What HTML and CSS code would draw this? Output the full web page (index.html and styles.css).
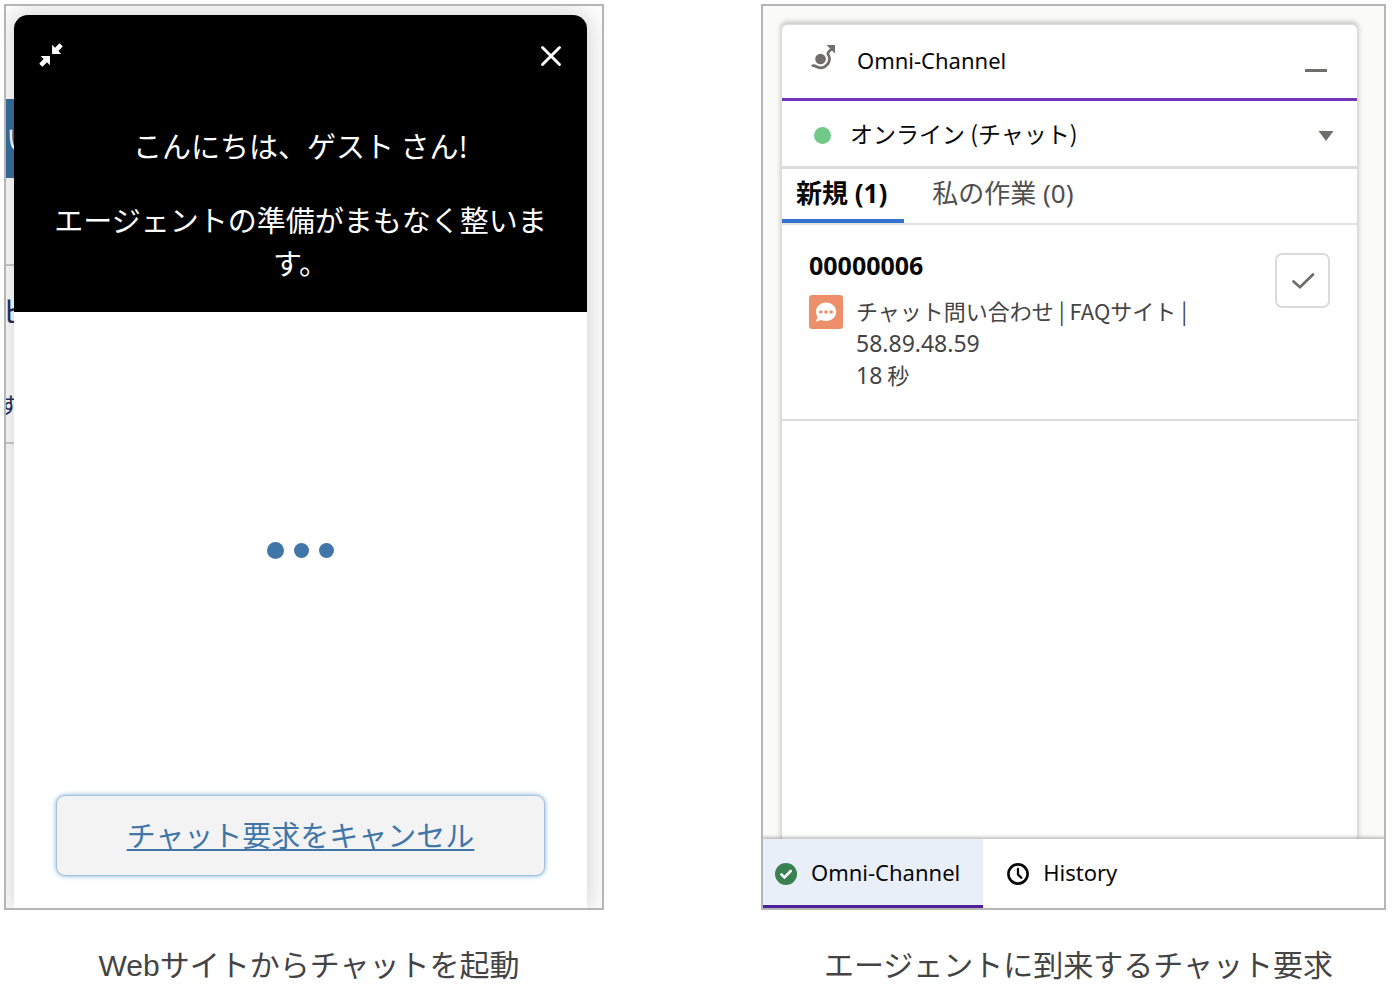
FILE: index.html
```html
<!DOCTYPE html>
<html lang="ja">
<head>
<meta charset="utf-8">
<meta name="viewport" content="width=device-width, initial-scale=1">
<title>チャット</title>
<link rel="stylesheet" href="styles.css">
</head>
<body>
<main class="gallery">
  <figure class="shot">
    <div class="frame site">
      <div class="site-page" aria-hidden="true">
        <div class="site-banner">い</div>
        <div class="site-title">ビ</div>
        <div class="site-text">す</div>
      </div>
      <section class="chat">
        <header class="chat-head">
          <div class="chat-tools">
            <button class="icon-btn" type="button" aria-label="最小化">
              <svg width="26" height="26" viewBox="0 0 24 24"><g fill="#fff"><path d="M13 2.500v8.500h8.500l-2.700-2.700 3.600-3.600q.6-.6 0-1.200l-1.900-1.900q-.6-.6-1.200 0l-3.600 3.600z"/><path d="M11 21.500V13H2.500l2.700 2.700-3.600 3.600q-.6.6 0 1.200l1.900 1.900q.6.600 1.200 0l3.600-3.600z"/></g></svg>
            </button>
            <button class="icon-btn" type="button" aria-label="閉じる">
              <svg width="24" height="24" viewBox="0 0 24 24"><path d="M3.500 3.500l17 17M20.500 3.500l-17 17" stroke="#fff" stroke-width="2.900" stroke-linecap="round"/></svg>
            </button>
          </div>
          <p class="greeting">こんにちは、ゲスト さん!</p>
          <p class="greeting">エージェントの準備がまもなく整います。</p>
        </header>
        <div class="loading" role="status" aria-label="読み込み中">
          <span class="dot dot-large"></span><span class="dot"></span><span class="dot"></span>
        </div>
        <button class="cancel" type="button">チャット要求をキャンセル</button>
      </section>
    </div>
    <figcaption>Webサイトからチャットを起動</figcaption>
  </figure>

  <figure class="shot">
    <div class="frame console">
      <section class="omni">
        <header class="omni-head">
          <svg class="omni-icon" width="24" height="26" viewBox="0 0 24 26"><circle cx="9.500" cy="15" r="5.300" fill="#706e6b"/><path d="M.8 22.300q2-1.600 4.200.2 4.500 2.500 8.800.2 4.700-3 4.700-7.900 0-2.300-1.300-4-.8-1.500.5-3L20.500 5" fill="none" stroke="#706e6b" stroke-width="2.700"/><path d="M15.500 1H24v8.500z" fill="#706e6b"/></svg>
          <h1 class="omni-title">Omni-Channel</h1>
          <button class="icon-btn minimize" type="button" aria-label="最小化"><span class="bar"></span></button>
        </header>
        <button class="status" type="button">
          <span class="presence"></span>
          <span class="status-label">オンライン (チャット)</span>
          <svg width="16" height="10" viewBox="0 0 16 10"><path d="M.5 0h15L8 10z" fill="#706e6b"/></svg>
        </button>
        <nav class="tabs">
          <button class="tab tab-on" type="button">新規 (1)</button>
          <button class="tab" type="button">私の作業 (0)</button>
        </nav>
        <article class="request">
          <div class="request-body">
            <h2 class="request-id">00000006</h2>
            <div class="request-info">
              <svg width="34" height="34" viewBox="0 0 34 34"><rect width="34" height="34" rx="3" fill="#ed8f6b"/><path d="M17 7.500c5.700 0 10.200 4.200 10.200 9.300S22.700 26 17 26c-1.800 0-3.500-.4-5-1.100l-4.400 1.500q-.7.200-.5-.5l1.400-3.900a9 9 0 0 1-1.600-5.200C6.900 11.700 11.400 7.500 17 7.500z" fill="#fff"/><g fill="#ed8f6b"><circle cx="11.800" cy="17" r="1.800"/><circle cx="17" cy="17" r="1.800"/><circle cx="22.200" cy="17" r="1.800"/></g></svg>
              <p class="request-text">チャット問い合わせ | FAQサイト | <span class="figures">58.89.48.59</span><br><span class="figures">18</span> 秒</p>
            </div>
          </div>
          <button class="accept" type="button" aria-label="承認">
            <svg width="24" height="18" viewBox="0 0 24 18"><path d="M2.500 9.500L9 15.200 22 2.500" fill="none" stroke="#706e6b" stroke-width="2.800" stroke-linecap="round"/></svg>
          </button>
        </article>
      </section>
      <footer class="utility">
        <button class="util util-on" type="button">
          <svg width="22" height="22" viewBox="0 0 22 22"><circle cx="11" cy="11" r="11" fill="#3a8050"/><path d="M6.500 11.500l3 3 6.200-6.500" fill="none" stroke="#fff" stroke-width="2.600" stroke-linecap="round"/></svg>
          <span>Omni-Channel</span>
        </button>
        <button class="util" type="button">
          <svg width="22" height="22" viewBox="0 0 22 22"><circle cx="11" cy="11" r="9.600" fill="none" stroke="#080707" stroke-width="2.600"/><path d="M11 6v5.500l3.300 3.300" fill="none" stroke="#080707" stroke-width="2.300" stroke-linecap="round"/></svg>
          <span>History</span>
        </button>
      </footer>
    </div>
    <figcaption>エージェントに到来するチャット要求</figcaption>
  </figure>
</main>
</body>
</html>
```
FILE: styles.css
```css
* { box-sizing: border-box; }

body {
  margin: 0;
  background: #fff;
  font-family: "Noto Sans", "Noto Sans CJK JP", sans-serif;
}

h1, h2, p { margin: 0; font-weight: 400; }

button {
  margin: 0;
  padding: 0;
  border: 0;
  background: none;
  color: inherit;
  font: inherit;
  cursor: pointer;
}

svg { display: block; flex: none; }

.gallery {
  display: grid;
  grid-template-columns: 600fr 625fr;
  column-gap: 157px;
  min-height: 100vh;
  padding: 4px 10px 0 4px;
}

.shot { display: flex; flex-direction: column; margin: 0; }

.frame {
  position: relative;
  display: flex;
  flex-direction: column;
  flex: 1;
  border: 2px solid #b5b5b5;
  overflow: hidden;
}

figcaption {
  height: 80px;
  padding: 34px 0 0 10px;
  font: 30px/44px "Liberation Sans", "Noto Sans CJK JP", sans-serif;
  color: #444;
  text-align: center;
}

/* Web site with the chat window over it */
.site { padding: 9px 15px 0 8px; }

.site-page {
  position: absolute;
  inset: 0 auto 0 0;
  width: 36px;
  padding-top: 93px;
  font-family: "Noto Sans CJK JP", sans-serif;
  color: #1f3260;
}

.site-banner {
  height: 79px;
  background: #3a6f9f;
  color: #fff;
  font-size: 28px;
  line-height: 79px;
}

.site-title {
  height: 88px;
  margin-top: 86px;
  border-top: 2px solid #ccc;
  font-size: 30px;
  line-height: 86px;
  text-indent: -4px;
}

.site-text {
  height: 92px;
  border-bottom: 2px solid #ccc;
  font-size: 22px;
  line-height: 102px;
  text-indent: -8px;
}

.chat {
  position: relative;
  display: flex;
  flex-direction: column;
  flex: 1;
  border-radius: 14px 14px 0 0;
  background: #fff;
  box-shadow: 0 0 24px 4px rgba(0, 0, 0, .16);
  font: 500 29px/43px "Noto Sans CJK JP", sans-serif;
}

.chat-head {
  padding: 27px 24px 28px;
  border-radius: 14px 14px 0 0;
  background: #000;
  color: #fff;
  text-align: center;
}

.chat-tools {
  display: flex;
  align-items: flex-end;
  justify-content: space-between;
  margin-bottom: 56px;
}

.greeting { padding: 0 14px; }
.greeting + .greeting { margin-top: 31px; }

.loading {
  display: flex;
  flex: 1;
  align-items: center;
  justify-content: center;
  gap: 10px;
  padding: 0 1px 6px 0;
}

.dot { width: 15px; height: 15px; border-radius: 50%; background: #4176a9; }
.dot-large { width: 17px; height: 17px; }

.cancel {
  margin: 0 42px 32px;
  height: 81px;
  padding-bottom: 3px;
  border: 1px solid #a0c2dc;
  border-radius: 9px;
  background: #f3f3f3;
  box-shadow: 0 0 5px #7fb0d6;
  color: #4176a9;
  font-weight: 400;
  text-decoration: underline;
  text-decoration-thickness: 2px;
  text-underline-offset: 2px;
}

/* Agent console */
.console { background: #fafaf9; font-size: 22px; color: #080707; }

.omni {
  flex: 1;
  margin: 18px 26px 0 18px;
  border: 1px solid #dddbda;
  border-bottom: 0;
  border-radius: 6px 6px 0 0;
  background: #fff;
  box-shadow: 0 -2px 4px 1px rgba(0, 0, 0, .18);
}

.omni-head {
  display: flex;
  align-items: center;
  height: 76px;
  padding: 0 30px 2px 29px;
  border-bottom: 3px solid #7434b8;
}

.omni-icon { margin: 0 22px 8px 0; }
.omni-title { padding-bottom: 2px; font-size: 22px; }
.minimize { margin-left: auto; padding-top: 19px; }
.bar { display: block; width: 22px; height: 3px; background: #706e6b; }

.status {
  display: flex;
  align-items: center;
  width: 100%;
  height: 68px;
  padding: 4px 23px 0 32px;
  border-bottom: 3px solid #dddbda;
  font-family: "Noto Sans CJK JP", sans-serif;
  font-size: 23px;
}

.presence { width: 17px; height: 17px; margin-right: 19px; border-radius: 50%; background: #71c989; }
.status-label { flex: 1; padding-bottom: 6px; text-align: left; }

.tabs { display: flex; height: 56px; border-bottom: 2px solid #e3e2e1; font-size: 26px; }
.tab { padding: 0 28px 9px; color: #514f4d; }
.tab-on {
  padding: 0 17px 5px 14px;
  border-bottom: 4px solid #3373ce;
  color: #080707;
  font-weight: 700;
}

.request {
  display: flex;
  align-items: flex-start;
  justify-content: space-between;
  height: 196px;
  padding: 24px 27px 0;
  border-bottom: 2px solid #dddbda;
}

.request-body { width: 400px; }
.request-id { font-size: 25px; line-height: 32px; font-weight: 700; }
.request-info { display: flex; gap: 13px; margin-top: 14px; color: #444; }
.request-text { margin-top: -1px; font-family: "Noto Sans CJK JP", sans-serif; line-height: 32px; }
.figures { font-family: "Noto Sans", sans-serif; font-size: 23px; line-height: 1; }

.accept {
  display: grid;
  place-items: center;
  width: 55px;
  height: 55px;
  margin-top: 4px;
  border: 2px solid #dddbda;
  border-radius: 7px;
}

.utility {
  position: relative;
  display: flex;
  height: 69px;
  background: #fff;
  box-shadow: 0 -1px 3px 1px rgba(0, 0, 0, .25);
}

.util { display: flex; align-items: center; gap: 14px; padding: 0 24px; }
.util span { padding-bottom: 3px; }
.util-on { padding: 3px 23px 0 12px; border-bottom: 3px solid #4f2199; background: #e8eff9; }
```
